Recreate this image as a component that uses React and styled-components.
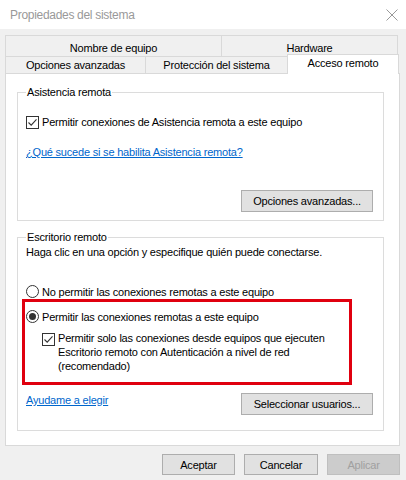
import React from "react";
import styled, { createGlobalStyle } from "styled-components";

const GlobalStyle = createGlobalStyle`
  html, body { margin: 0; padding: 0; background: #f0f0f0; }
  body { font-family: "Liberation Sans", Arial, sans-serif; font-size: 11px; letter-spacing: -0.2px; color: #000; }
  * { box-sizing: border-box; }
`;

const Window = styled.div`
  width: 406px;
  height: 480px;
  background: #f0f0f0;
  display: flex;
  flex-direction: column;
  overflow: hidden;
`;

const TitleBar = styled.div`
  height: 29px;
  background: #fff;
  display: flex;
  align-items: center;
  justify-content: space-between;
  padding: 0 8px 0 10px;
`;

const Title = styled.span`
  font-size: 12px;
  letter-spacing: -0.3px;
  color: #999;
`;

const Body = styled.div`
  padding: 6px 6px 0 5px;
  display: flex;
  flex-direction: column;
`;

const TabRow = styled.div`
  display: flex;
  height: ${(p) => p.$h}px;
  margin-left: 1px;
`;

const Tab = styled.div`
  width: ${(p) => p.$w}px;
  margin-left: -1px;
  border: 1px solid #d9d9d9;
  border-bottom: none;
  background: ${(p) => (p.$active ? "#fff" : "#f0f0f0")};
  display: flex;
  align-items: flex-end;
  justify-content: center;
  padding-bottom: ${(p) => p.$pb}px;
  line-height: 14px;
  white-space: nowrap;
  ${(p) =>
    p.$active &&
    `
    position: relative;
    z-index: 2;
    margin-top: -2px;
    margin-bottom: -1px;
    height: calc(100% + 3px);
  `}
`;

const Panel = styled.div`
  background: #fff;
  border: 1px solid #d9d9d9;
  padding: 11px 15px 14px 11px;
  display: flex;
  flex-direction: column;
`;

const Group = styled.fieldset`
  margin: ${(p) => p.$mt || 0}px 0 0 0;
  border: 1px solid #dcdcdc;
  padding: 0 10px ${(p) => p.$pb}px 8px;
  min-width: 0;
  display: flex;
  flex-direction: column;
`;

const Legend = styled.legend`
  padding: 0 1px;
  line-height: 14px;
`;

const CheckRow = styled.label`
  display: flex;
  align-items: flex-start;
  gap: 3px;
  line-height: 14px;
  margin-top: ${(p) => p.$mt || 0}px;
  margin-left: ${(p) => p.$ml || 0}px;
`;

const Box = styled.span`
  flex: none;
  width: 13px;
  height: 13px;
  border: 1px solid #333;
  background: #fff;
  margin-top: ${(p) => p.$mt || 0}px;
  display: flex;
  align-items: center;
  justify-content: center;
`;

const Radio = styled.span`
  flex: none;
  width: 13px;
  height: 13px;
  border: 1px solid #333;
  border-radius: 50%;
  background: #fff;
  display: flex;
  align-items: center;
  justify-content: center;
  &::after {
    content: "";
    display: ${(p) => (p.$on ? "block" : "none")};
    width: 7px;
    height: 7px;
    border-radius: 50%;
    background: #333;
  }
`;

const Text = styled.div`
  line-height: 14px;
  margin-top: ${(p) => p.$mt || 0}px;
`;

const Link = styled.a`
  color: #0066cc;
  text-decoration: underline;
  line-height: 14px;
  margin-top: ${(p) => p.$mt || 0}px;
  align-self: flex-start;
  cursor: pointer;
`;

const Button = styled.button`
  font-family: inherit;
  font-size: 11px;
  letter-spacing: inherit;
  color: ${(p) => (p.disabled ? "#a0a0a0" : "#000")};
  width: ${(p) => p.$w}px;
  height: ${(p) => p.$h || 21}px;
  background: ${(p) => (p.disabled ? "#cccccc" : "#e1e1e1")};
  border: 1px solid ${(p) => (p.disabled ? "#bfbfbf" : "#adadad")};
  padding: 0;
  margin: 0;
  border-radius: 0;
`;

const ButtonRight = styled.div`
  display: flex;
  justify-content: flex-end;
  margin-top: ${(p) => p.$mt || 0}px;
`;

const Highlight = styled.div`
  position: relative;
  display: flex;
  flex-direction: column;
  margin-top: ${(p) => p.$mt || 0}px;
`;

const RedFrame = styled.div`
  position: absolute;
  left: -4px;
  top: -11px;
  width: 330px;
  height: 86px;
  border: 3px solid #e0000f;
  pointer-events: none;
`;

const HelpRow = styled.div`
  display: flex;
  align-items: center;
  justify-content: space-between;
  margin-top: 20px;
`;

const Footer = styled.div`
  display: flex;
  justify-content: flex-end;
  gap: 9px;
  margin-top: 8px;
`;

const Check = () => (
  <svg width="11" height="11" viewBox="0 0 11 11">
    <path d="M1.5 5.5 L4.2 8.2 L9.5 2.4" fill="none" stroke="#333" strokeWidth="1.1" />
  </svg>
);

const Close = () => (
  <svg width="12" height="12" viewBox="0 0 12 12">
    <path d="M0.5 0.5 L11.5 11.5 M11.5 0.5 L0.5 11.5" stroke="#999" strokeWidth="1" />
  </svg>
);

export default function App() {
  return (
    <>
      <GlobalStyle />
      <Window>
        <TitleBar>
          <Title>Propiedades del sistema</Title>
          <Close />
        </TitleBar>
        <Body>
          <TabRow $h={21}>
            <Tab $w={217} $pb={1}>Nombre de equipo</Tab>
            <Tab $w={177} $pb={1}>Hardware</Tab>
          </TabRow>
          <TabRow $h={17}>
            <Tab $w={141} $pb={1}>Opciones avanzadas</Tab>
            <Tab $w={143} $pb={1}>Protección del sistema</Tab>
            <Tab $w={112} $pb={4} $active>Acceso remoto</Tab>
          </TabRow>
          <Panel>
            <Group $pb={8}>
              <Legend>Asistencia remota</Legend>
              <CheckRow $mt={16}>
                <Box $mt={1}><Check /></Box>
                Permitir conexiones de Asistencia remota a este equipo
              </CheckRow>
              <Link $mt={16}>¿Qué sucede si se habilita Asistencia remota?</Link>
              <ButtonRight $mt={31}>
                <Button $w={132} $h={22}>Opciones avanzadas...</Button>
              </ButtonRight>
            </Group>
            <Group $mt={9} $pb={15}>
              <Legend>Escritorio remoto</Legend>
              <Text $mt={1}>Haga clic en una opción y especifique quién puede conectarse.</Text>
              <CheckRow $mt={26}>
                <Radio />
                No permitir las conexiones remotas a este equipo
              </CheckRow>
              <Highlight $mt={11}>
                <RedFrame />
                <CheckRow>
                  <Radio $on />
                  Permitir las conexiones remotas a este equipo
                </CheckRow>
                <CheckRow $mt={7} $ml={16}>
                  <Box $mt={2}><Check /></Box>
                  <span>
                    Permitir solo las conexiones desde equipos que ejecuten
                    <br />
                    Escritorio remoto con Autenticación a nivel de red
                    <br />
                    (recomendado)
                  </span>
                </CheckRow>
              </Highlight>
              <HelpRow>
                <Link>Ayudame a elegir</Link>
                <Button $w={132} $h={22}>Seleccionar usuarios...</Button>
              </HelpRow>
            </Group>
          </Panel>
          <Footer>
            <Button $w={73}>Aceptar</Button>
            <Button $w={74}>Cancelar</Button>
            <Button $w={73} disabled>Aplicar</Button>
          </Footer>
        </Body>
      </Window>
    </>
  );
}
